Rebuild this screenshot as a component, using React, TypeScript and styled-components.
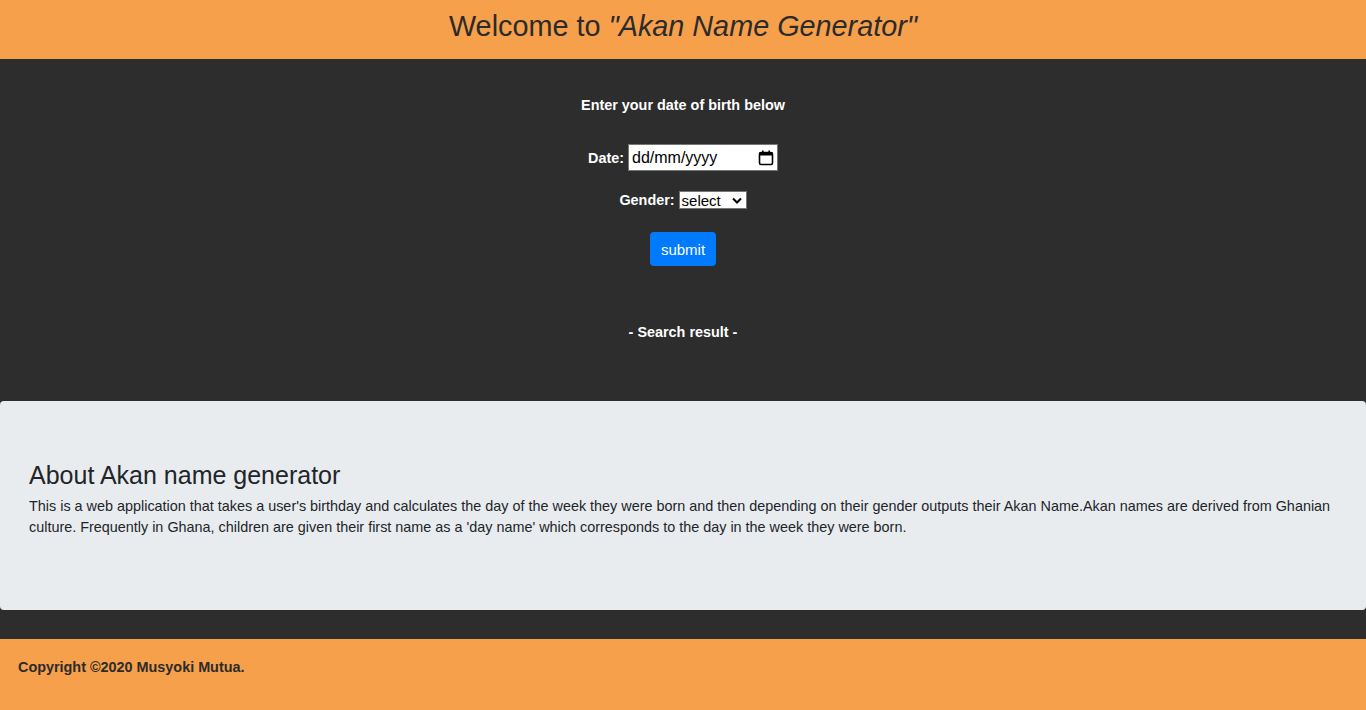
import React from "react";
import styled, { createGlobalStyle } from "styled-components";

const Global = createGlobalStyle`
  html, body { margin: 0; padding: 0; }
  body {
    background: #2d2d2d;
    font-family: "Liberation Sans", Arial, sans-serif;
    font-size: 14.4px;
    color: #212529;
  }
`;

const Header = styled.header`
  background: #f7a04b;
  height: 59px;
  box-sizing: border-box;
  padding-top: 8px;
  display: flex;
  justify-content: center;
`;

const Title = styled.h1`
  margin: 0;
  font-size: 28.8px;
  line-height: 36px;
  font-weight: 400;
  color: #2b2b2b;
  em { font-style: italic; }
`;

const Main = styled.main`
  background: #2d2d2d;
  height: 342px;
  display: flex;
  flex-direction: column;
  align-items: center;
  color: #fff;
  padding-top: 37px;
  box-sizing: border-box;
`;

const Lead = styled.p`
  margin: 0 0 30px;
  font-weight: 700;
  font-size: 14.4px;
  line-height: 18px;
`;

const Row = styled.label<{ $mb: number }>`
  display: flex;
  align-items: center;
  gap: 4px;
  font-weight: 700;
  font-size: 14.4px;
  margin-bottom: ${(p) => p.$mb}px;
`;

const DateBox = styled.div`
  width: 150px;
  height: 27px;
  background: #fff;
  border: 1px solid #767676;
  box-sizing: border-box;
  display: flex;
  align-items: center;
  justify-content: space-between;
  padding: 0 3px 0 3px;
  color: #000;
  font-weight: 400;
  font-size: 16px;
`;

const SelectBox = styled.div`
  width: 68px;
  height: 18px;
  background: #fff;
  border: 1px solid #767676;
  box-sizing: border-box;
  display: flex;
  align-items: center;
  justify-content: space-between;
  padding: 0 4px 0 2px;
  color: #000;
  font-weight: 400;
  font-size: 15px;
`;

const Button = styled.button`
  width: 66px;
  height: 34px;
  background: #007bff;
  border: none;
  border-radius: 4px;
  color: #fff;
  font-family: inherit;
  font-size: 15px;
  padding: 0;
  margin-bottom: 57px;
`;

const Result = styled.p`
  margin: 0;
  font-weight: 700;
  font-size: 14.4px;
  line-height: 18px;
`;

const Jumbo = styled.section`
  background: #e9ecef;
  border-radius: 4px;
  height: 209px;
  box-sizing: border-box;
  padding: 59px 29px 0;
  margin-bottom: 29px;
`;

const H2 = styled.h2`
  margin: 0 0 6px;
  font-size: 25px;
  font-weight: 400;
  line-height: 30px;
  color: #212529;
`;

const Para = styled.p`
  margin: 0;
  font-size: 14.4px;
  line-height: 21px;
  color: #212529;
`;

const Footer = styled.footer`
  background: #f7a04b;
  height: 71px;
  box-sizing: border-box;
  padding: 19px 18px 0;
  font-weight: 700;
  font-size: 14.4px;
  line-height: 18px;
  color: #2b2b2b;
`;

const CalendarIcon = () => (
  <svg width="16" height="16" viewBox="0 0 16 16">
    <rect x="1.5" y="2.5" width="13" height="12" rx="1.5" fill="none" stroke="#000" strokeWidth="1.6" />
    <rect x="1.5" y="2.5" width="13" height="3" fill="#000" />
    <rect x="4" y="0.5" width="1.6" height="3" fill="#000" />
    <rect x="10.4" y="0.5" width="1.6" height="3" fill="#000" />
  </svg>
);

const Chevron = () => (
  <svg width="10" height="7" viewBox="0 0 10 7">
    <path d="M1 1.5 L5 5.5 L9 1.5" fill="none" stroke="#000" strokeWidth="2" />
  </svg>
);

export default function App() {
  return (
    <>
      <Global />
      <Header>
        <Title>
          Welcome to <em>"Akan Name Generator"</em>
        </Title>
      </Header>
      <Main>
        <Lead>Enter your date of birth below</Lead>
        <Row $mb={20}>
          Date: <DateBox>dd/mm/yyyy<CalendarIcon /></DateBox>
        </Row>
        <Row $mb={23}>
          Gender: <SelectBox>select<Chevron /></SelectBox>
        </Row>
        <Button>submit</Button>
        <Result>- Search result -</Result>
      </Main>
      <Jumbo>
        <H2>About Akan name generator</H2>
        <Para>
          This is a web application that takes a user's birthday and calculates the day of the week they were born and then depending on their gender outputs their Akan Name.Akan names are derived from Ghanian culture. Frequently in Ghana, children are given their first name as a 'day name' which corresponds to the day in the week they were born.
        </Para>
      </Jumbo>
      <Footer>Copyright ©2020 Musyoki Mutua.</Footer>
    </>
  );
}
